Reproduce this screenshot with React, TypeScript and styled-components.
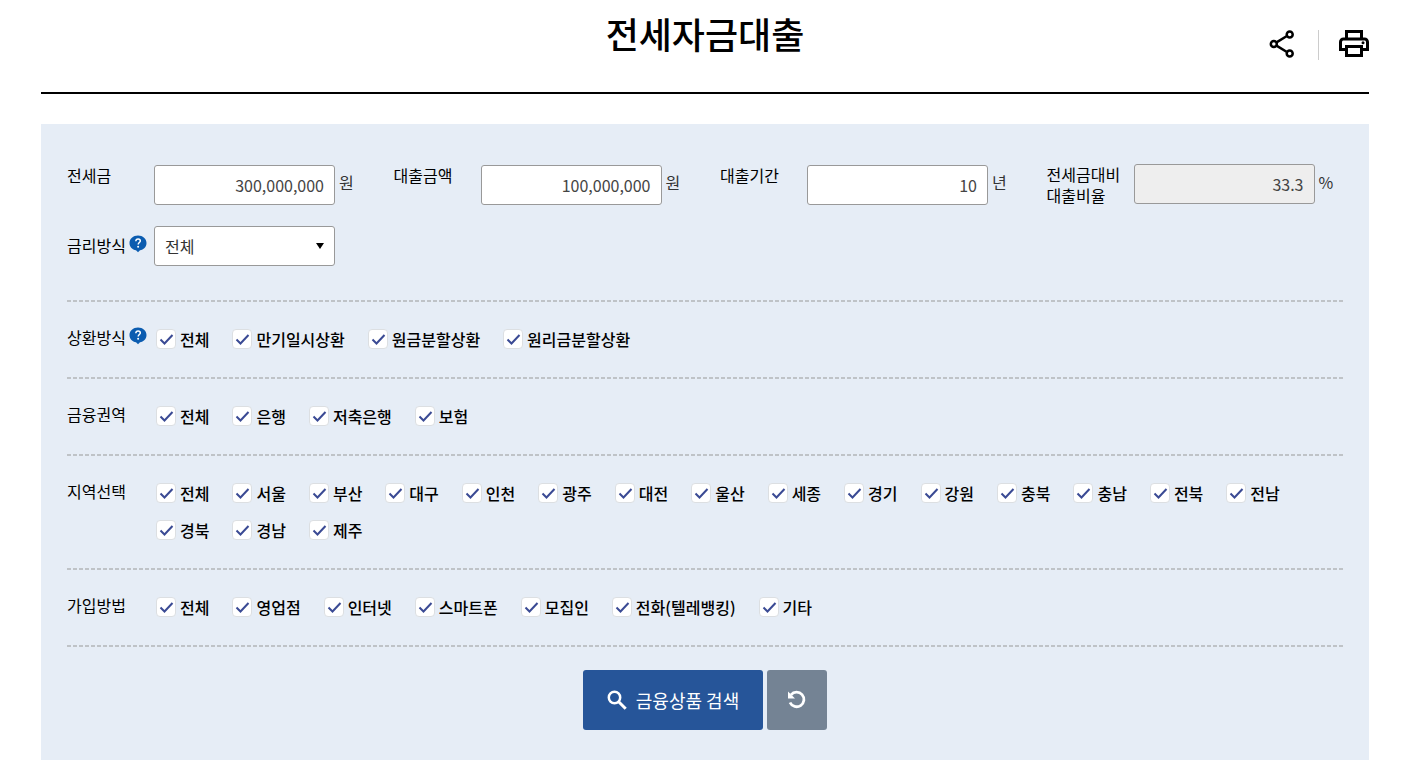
import React from "react";
import styled, { createGlobalStyle, css } from "styled-components";

const GlobalStyle = createGlobalStyle`
  *, *::before, *::after { box-sizing: border-box; }
  body {
    margin: 0;
    background: #fff;
    color: #000;
    font-family: "Noto Sans CJK KR", "Noto Sans", sans-serif;
    font-size: 16px;
    line-height: 20px;
  }
  button, input, select { font: inherit; }
`;

const dashedTop = css`
  background: repeating-linear-gradient(90deg, #bfc3c7 0 4px, transparent 4px 6px) top / 100% 2px no-repeat;
`;

const Page = styled.main`
  padding: 0 39px 20px 41px;
`;

const Header = styled.header`
  display: grid;
  grid-template-columns: 1fr auto 1fr;
  height: 94px;
  border-bottom: 2px solid #000;
`;

const Title = styled.h1`
  grid-column: 2;
  margin: 0;
  padding-top: 7px;
  font-size: 36px;
  font-weight: 500;
  line-height: 52px;
`;

const Tools = styled.div`
  display: flex;
  justify-content: flex-end;
  align-items: flex-start;
  padding-top: 30px;
`;

const ToolButton = styled.button`
  display: flex;
  padding: 0;
  border: 0;
  background: none;
  cursor: pointer;
`;

const ToolDivider = styled.span`
  width: 1px;
  height: 30px;
  margin: 0 20px 0 23px;
  background: #ccc;
`;

const Panel = styled.form`
  margin-top: 30px;
  padding: 40px 26px 30px;
  background: #e6edf6;
`;

const Fields = styled.div`
  display: grid;
  grid-template-columns: repeat(4, minmax(0, 1fr));
  gap: 20px 30px;
  padding-bottom: 34px;
`;

const Field = styled.div`
  display: flex;
  align-items: flex-start;
`;

const FieldLabel = styled.label<{ $twoLines: boolean }>`
  flex: none;
  width: 87px;
  padding-top: ${(p) => (p.$twoLines ? 0 : 1)}px;
  line-height: 21px;
  white-space: pre-line;
`;

const TextInput = styled.input`
  flex: 0 1 181px;
  min-width: 0;
  height: 40px;
  margin-top: 1px;
  padding: 0 10px;
  border: 1px solid #999;
  border-radius: 3px;
  background: #fff;
  color: #444;
  text-align: right;

  &:read-only {
    margin-top: 0;
    background: #eee;
  }
`;

const Unit = styled.span`
  padding: 8px 0 0 4px;
  color: #333;
`;

const SelectBox = styled.div`
  position: relative;
  flex: 0 1 181px;
`;

const Select = styled.select`
  appearance: none;
  width: 100%;
  height: 40px;
  padding: 0 30px 0 10px;
  border: 1px solid #999;
  border-radius: 3px;
  background: #fff;
  color: #333;
`;

const Arrow = styled.svg`
  position: absolute;
  top: 17px;
  right: 11px;
  pointer-events: none;
`;

const LabelRow = styled.div`
  display: flex;
  flex: none;
  width: 87px;
  gap: 3px;
`;

const HelpButton = styled.button`
  display: flex;
  height: 18px;
  padding: 0;
  border: 0;
  background: none;
  cursor: pointer;
`;

const SelectLabelRow = styled(LabelRow)`
  padding-top: 9px;
`;

const Group = styled.fieldset`
  display: flex;
  margin: 0;
  padding: 20px 0;
  border: 0;
  ${dashedTop}
`;

const GroupLabel = styled(LabelRow)`
  padding-top: 7px;
`;

const Options = styled.div`
  display: flex;
  flex: 1;
  flex-wrap: wrap;
  column-gap: 23px;
  padding-left: 2px;
`;

const Option = styled.label`
  display: flex;
  align-items: center;
  gap: 4px;
  height: 37px;
  font-weight: 500;
  cursor: pointer;
`;

const Box = styled.span`
  position: relative;
  display: flex;
  width: 20px;
  height: 20px;
`;

const Check = styled.input`
  appearance: none;
  width: 20px;
  height: 20px;
  margin: 0;
  border: 1px solid #dcdfe2;
  border-radius: 4px;
  background: #fff;

  & + svg { display: none; }
  &:checked + svg { display: block; }
`;

const Tick = styled.svg`
  position: absolute;
  inset: 0;
  pointer-events: none;
`;

const Actions = styled.div`
  display: flex;
  justify-content: center;
  gap: 4px;
  padding-top: 25px;
  ${dashedTop}
`;

const ActionButton = styled.button<{ $tone: string; $width: number }>`
  display: flex;
  align-items: center;
  justify-content: center;
  gap: 9px;
  width: ${(p) => p.$width}px;
  height: 60px;
  padding: 0;
  border: 0;
  border-radius: 3px;
  background: ${(p) => p.$tone};
  color: #fff;
  font-size: 18px;
  cursor: pointer;
`;

const Help = ({ label }: { label: string }) => (
  <HelpButton type="button" aria-label={label}>
    <svg width="18" height="18" viewBox="0 0 18 18">
      <path d="M9 0.5C4.2 0.5.5 3.7.5 8c0 4 3 6.700 6.500 7.300L9 17.300l2-2c3.500-.6 6.500-3.300 6.500-7.300C17.500 3.700 13.800.5 9 .5z" fill="#0b5cb0" />
      <path d="M6.800 6.200C6.900 4.700 7.900 4 9.100 4c1.300 0 2.200.8 2.200 1.900 0 1.500-2.100 1.700-2.100 3.500" fill="none" stroke="#fff" strokeWidth="1.500" />
      <circle cx="9.100" cy="11.700" r="1" fill="#fff" />
    </svg>
  </HelpButton>
);

const fields = [
  { id: "deposit", label: "전세금", value: "300,000,000", unit: "원" },
  { id: "amount", label: "대출금액", value: "100,000,000", unit: "원" },
  { id: "period", label: "대출기간", value: "10", unit: "년" },
  { id: "ratio", label: "전세금대비\n대출비율", value: "33.3", unit: "%", readOnly: true },
];

const groups = [
  { name: "상환방식", help: true, options: ["전체", "만기일시상환", "원금분할상환", "원리금분할상환"] },
  { name: "금융권역", options: ["전체", "은행", "저축은행", "보험"] },
  {
    name: "지역선택",
    options: ["전체", "서울", "부산", "대구", "인천", "광주", "대전", "울산", "세종", "경기", "강원", "충북", "충남", "전북", "전남", "경북", "경남", "제주"],
  },
  { name: "가입방법", options: ["전체", "영업점", "인터넷", "스마트폰", "모집인", "전화(텔레뱅킹)", "기타"] },
];

export default function App() {
  return (
    <>
      <GlobalStyle />
      <Page>
        <Header>
          <Title>전세자금대출</Title>
          <Tools>
            <ToolButton type="button" aria-label="공유">
              <svg width="26" height="28" viewBox="0 1 26 28" fill="none" stroke="#000" strokeWidth="2.500">
                <path d="M7.500 13.400 17.500 7.300M7.500 16.600l10 6.200" />
                <circle cx="4.800" cy="15" r="3" />
                <circle cx="20.700" cy="5.500" r="3" />
                <circle cx="20.700" cy="24.500" r="3" />
              </svg>
            </ToolButton>
            <ToolDivider />
            <ToolButton type="button" aria-label="인쇄">
              <svg width="30" height="27" viewBox="2 3 20 18">
                <path d="M19 8h-1V3H6v5H5c-1.660 0-3 1.340-3 3v6h4v4h12v-4h4v-6c0-1.660-1.340-3-3-3zM8 5h8v3H8V5zm8 12v2H8v-4h8v2zm2-2v-2H6v2H4v-4c0-.55.45-1 1-1h14c.55 0 1 .45 1 1v4h-2z" />
                <circle cx="18" cy="11.500" r="1" />
              </svg>
            </ToolButton>
          </Tools>
        </Header>

        <Panel onSubmit={(e) => e.preventDefault()}>
          <Fields>
            {fields.map((f) => (
              <Field key={f.id}>
                <FieldLabel htmlFor={f.id} $twoLines={f.label.includes("\n")}>
                  {f.label}
                </FieldLabel>
                <TextInput id={f.id} type="text" defaultValue={f.value} readOnly={f.readOnly} />
                <Unit>{f.unit}</Unit>
              </Field>
            ))}
            <Field>
              <SelectLabelRow>
                <label htmlFor="rate">금리방식</label>
                <Help label="금리방식 도움말" />
              </SelectLabelRow>
              <SelectBox>
                <Select id="rate" defaultValue="전체">
                  <option>전체</option>
                  <option>고정금리</option>
                  <option>변동금리</option>
                </Select>
                <Arrow width="8" height="6" viewBox="0 0 8 6">
                  <path d="M0 0h8L4 6z" fill="#000" />
                </Arrow>
              </SelectBox>
            </Field>
          </Fields>

          {groups.map((g) => (
            <Group key={g.name} aria-label={g.name}>
              <GroupLabel>
                <span>{g.name}</span>
                {g.help && <Help label={`${g.name} 도움말`} />}
              </GroupLabel>
              <Options>
                {g.options.map((o) => (
                  <Option key={o}>
                    <Box>
                      <Check type="checkbox" defaultChecked />
                      <Tick width="20" height="20" viewBox="0 0 20 20">
                        <path d="M4.500 10.500 8.500 14.500 16.500 6" fill="none" stroke="#3a4a94" strokeWidth="2" />
                      </Tick>
                    </Box>
                    {o}
                  </Option>
                ))}
              </Options>
            </Group>
          ))}

          <Actions>
            <ActionButton type="submit" $tone="#265599" $width={180}>
              <svg width="20" height="20" viewBox="0 0 20 20" fill="none" stroke="#fff" strokeWidth="2.500">
                <circle cx="7.500" cy="7.500" r="5.700" />
                <path d="m11.700 11.700 7 7" strokeWidth="3" />
              </svg>
              금융상품 검색
            </ActionButton>
            <ActionButton type="reset" $tone="#748394" $width={60} aria-label="초기화">
              <svg width="20" height="20" viewBox="0 0 20 20" fill="none" stroke="#fff" strokeWidth="2.800">
                <path d="M4 4.800A7.300 7.300 0 1 1 3 12.500" />
                <path d="M1 1.500v7h7z" fill="#fff" stroke="none" />
              </svg>
            </ActionButton>
          </Actions>
        </Panel>
      </Page>
    </>
  );
}
